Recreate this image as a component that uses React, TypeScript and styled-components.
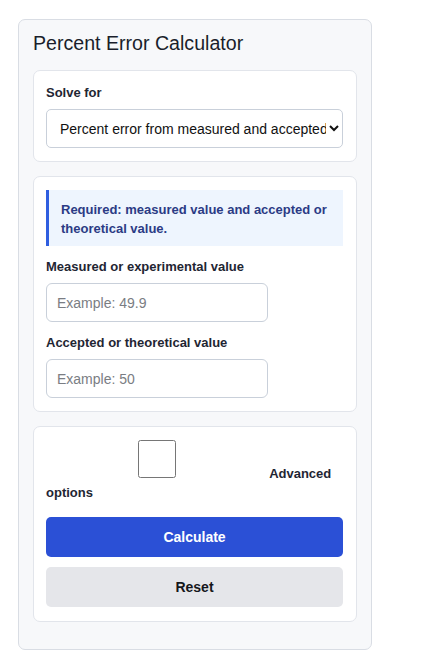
import React, { useState } from "react";
import styled, { createGlobalStyle } from "styled-components";

const GlobalStyle = createGlobalStyle`
  body {
    margin: 0;
    background: #ffffff;
    font-family: "Liberation Sans", Arial, sans-serif;
  }
`;

const Page = styled.div`
  padding: 19px 0 16px 18px;
`;

const Calculator = styled.div`
  width: 324px;
  padding: 11px 14px 27px;
  background: #f7f8fa;
  border: 1px solid #d9dde4;
  border-radius: 7px;
  display: flex;
  flex-direction: column;
  gap: 14px;
`;

const Title = styled.h2`
  margin: 0 0 1px;
  font-size: 19.6px;
  line-height: 24px;
  font-weight: 400;
  color: #1a1e2b;
`;

const Section = styled.div<{ $bottom?: number }>`
  background: #ffffff;
  border: 1px solid #e2e5eb;
  border-radius: 7px;
  padding: 13px 13px ${(p) => p.$bottom ?? 13}px 12px;
  display: flex;
  flex-direction: column;
  gap: 12px;
`;

const Field = styled.div`
  display: flex;
  flex-direction: column;
  gap: 8px;
`;

const Label = styled.label`
  font-size: 13px;
  line-height: 17px;
  font-weight: 700;
  color: #1f2633;
`;

const Select = styled.select`
  width: 100%;
  height: 39px;
  padding: 0 0 0 9px;
  border: 1px solid #c9d0da;
  border-radius: 5px;
  background: #ffffff;
  font-family: "Liberation Sans", Arial, sans-serif;
  font-size: 14px;
  color: #111111;
`;

const Notice = styled.div`
  padding: 10px 12px 8px 12px;
  background: #eef5fe;
  border-left: 3px solid #2f5ee0;
  font-size: 13px;
  line-height: 19px;
  font-weight: 700;
  color: #2b3b85;
`;

const Input = styled.input`
  box-sizing: border-box;
  width: 222px;
  height: 39px;
  padding: 0 10px;
  border: 1px solid #c9d0da;
  border-radius: 6px;
  font-family: "Liberation Sans", Arial, sans-serif;
  font-size: 14px;
  color: #111111;
  &::placeholder {
    color: #7a7d83;
  }
`;

const CheckLabel = styled.label`
  font-size: 13px;
  line-height: 19px;
  font-weight: 700;
  color: #1f2633;
  margin-bottom: 3px;
`;

const Checkbox = styled.input`
  width: 222px;
  height: 38px;
  margin: 0 -2px 0 0;
  vertical-align: baseline;
`;

const Button = styled.button<{ $primary?: boolean }>`
  height: 40px;
  border: none;
  border-radius: 5px;
  background: ${(p) => (p.$primary ? "#2b50d6" : "#e5e6ea")};
  color: ${(p) => (p.$primary ? "#ffffff" : "#15171c")};
  font-family: "Liberation Sans", Arial, sans-serif;
  font-size: 14px;
  font-weight: 700;
  cursor: pointer;
`;

const ButtonGroup = styled.div`
  display: flex;
  flex-direction: column;
  gap: 10px;
`;

export default function App() {
  const [measured, setMeasured] = useState("");
  const [accepted, setAccepted] = useState("");
  const [advanced, setAdvanced] = useState(false);

  const reset = () => {
    setMeasured("");
    setAccepted("");
    setAdvanced(false);
  };

  return (
    <>
      <GlobalStyle />
      <Page>
        <Calculator>
          <Title>Percent Error Calculator</Title>
          <Section>
            <Field>
              <Label htmlFor="solve">Solve for</Label>
              <Select id="solve" defaultValue="percent">
                <option value="percent">
                  Percent error from measured and accepted values
                </option>
                <option value="measured">Measured value from percent error</option>
                <option value="accepted">Accepted value from percent error</option>
              </Select>
            </Field>
          </Section>
          <Section>
            <Notice>
              Required: measured value and accepted or theoretical value.
            </Notice>
            <Field>
              <Label htmlFor="measured">Measured or experimental value</Label>
              <Input
                id="measured"
                placeholder="Example: 49.9"
                value={measured}
                onChange={(e) => setMeasured(e.target.value)}
              />
            </Field>
            <Field>
              <Label htmlFor="accepted">Accepted or theoretical value</Label>
              <Input
                id="accepted"
                placeholder="Example: 50"
                value={accepted}
                onChange={(e) => setAccepted(e.target.value)}
              />
            </Field>
          </Section>
          <Section $bottom={14}>
            <CheckLabel>
              <Checkbox
                type="checkbox"
                checked={advanced}
                onChange={(e) => setAdvanced(e.target.checked)}
              />{" "}
              Advanced options
            </CheckLabel>
            <ButtonGroup>
              <Button $primary>Calculate</Button>
              <Button onClick={reset}>Reset</Button>
            </ButtonGroup>
          </Section>
        </Calculator>
      </Page>
    </>
  );
}
